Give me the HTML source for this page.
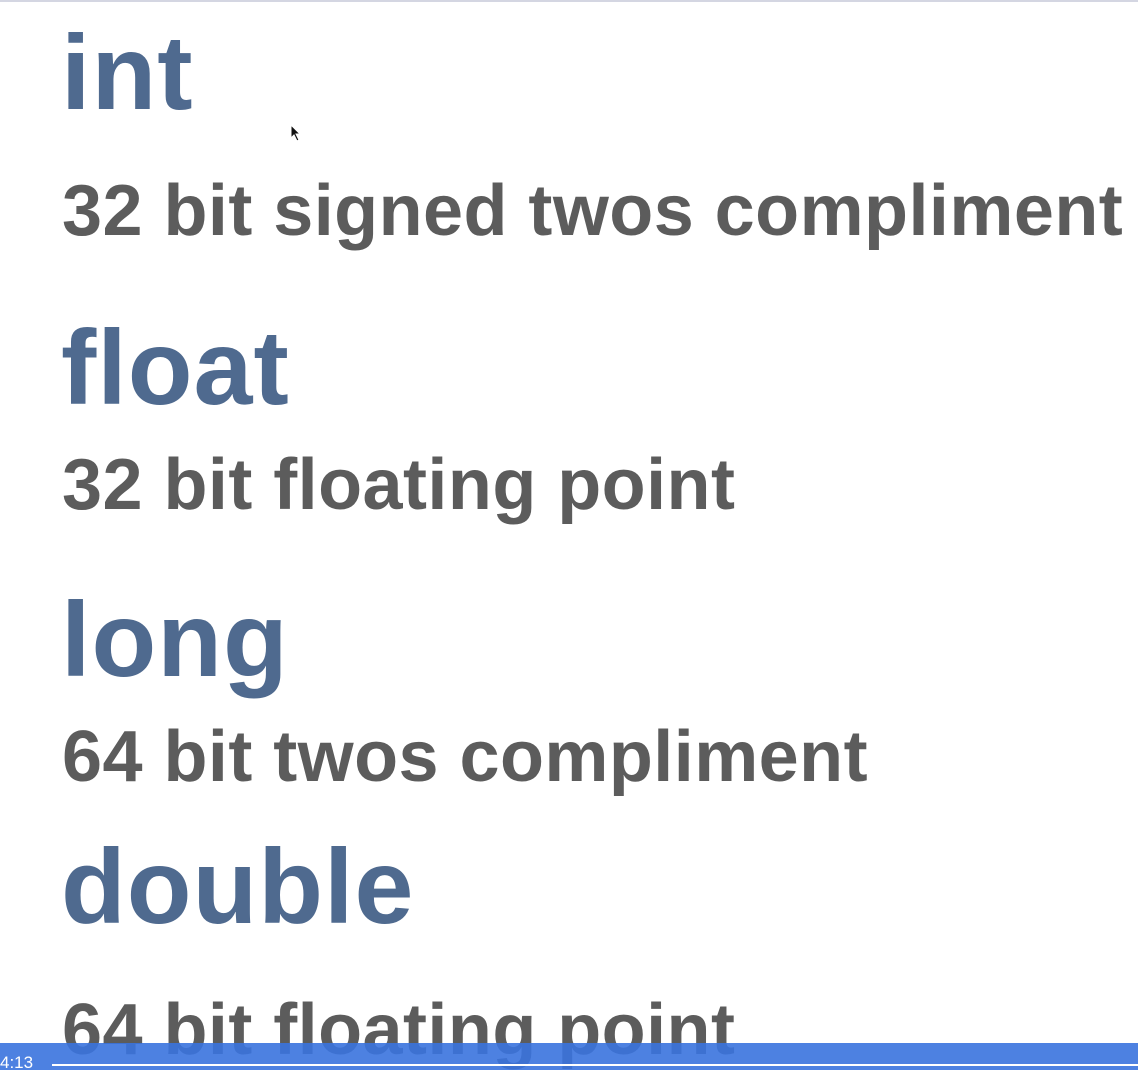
<!DOCTYPE html>
<html><head><meta charset="utf-8"><style>
html,body{margin:0;padding:0;width:1138px;height:1070px;overflow:hidden;background:#fff;position:relative;font-family:"Liberation Sans",sans-serif;font-weight:bold}
.h{position:absolute;left:61px;font-size:106px;line-height:1;color:#4f6a8f;white-space:nowrap;letter-spacing:1px}
.b{position:absolute;left:62px;font-size:72px;line-height:1;color:#5c5c5c;white-space:nowrap;letter-spacing:0.45px}
.top{position:absolute;left:0;top:0;width:1138px;height:2px;background:#d4d6e2}
.bar{position:absolute;left:0;top:1043px;width:1138px;height:27px;background:rgba(58,115,222,0.9)}
.t{position:absolute;left:0;top:1053px;font:17px "Liberation Sans",sans-serif;color:#fff}
.line{position:absolute;left:52px;top:1064px;width:1086px;height:2px;background:#fff}
</style></head><body>
<div class="top"></div>
<div class="h" style="top:20px">int</div>
<div class="b" style="top:175px">32 bit signed twos compliment</div>
<div class="h" style="top:315px">float</div>
<div class="b" style="top:449px">32 bit floating point</div>
<div class="h" style="top:587px">long</div>
<div class="b" style="top:721px">64 bit twos compliment</div>
<div class="h" style="top:834px">double</div>
<div class="b" style="top:994px">64 bit floating point</div>
<svg style="position:absolute;left:290px;top:124px" width="12" height="20" viewBox="0 0 12 20"><path d="M1 1 L1 14 L4 11 L7 17 L9 16 L6 10 L10 10 Z" fill="#111" stroke="#fff" stroke-width="1"/></svg>
<div class="bar"></div>
<div class="t">4:13</div>
<div class="line"></div>
</body></html>
